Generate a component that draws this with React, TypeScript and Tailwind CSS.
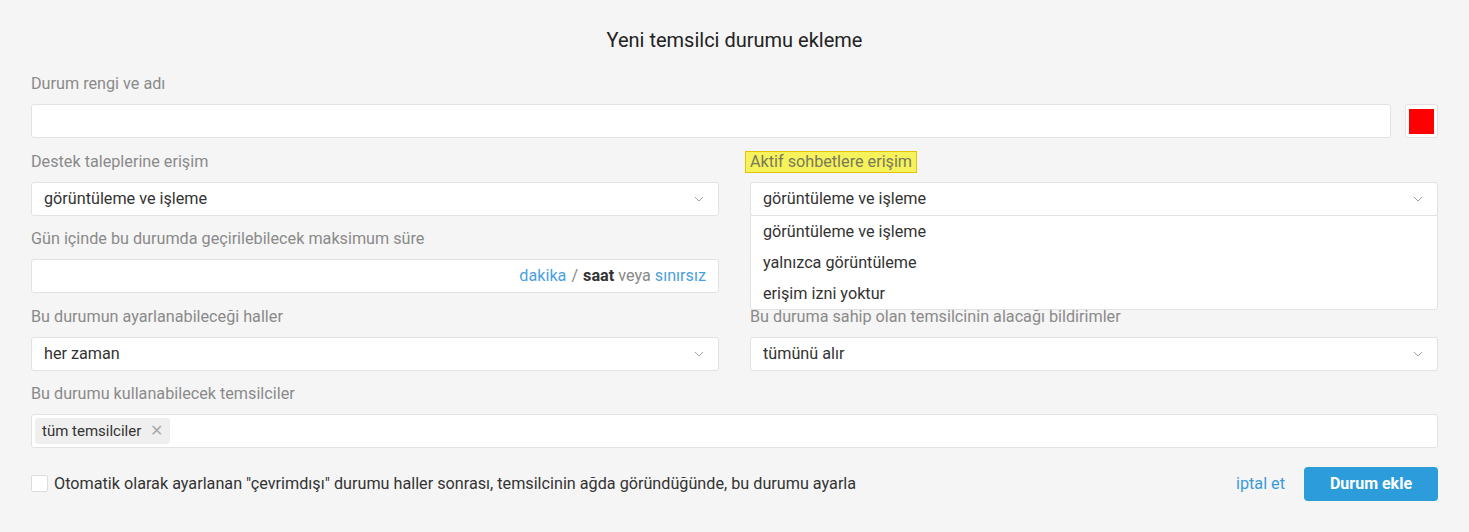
import React from 'react';

function Chevron() {
  return (
    <svg width="10" height="6" viewBox="0 0 10 6" className="shrink-0">
      <path d="M1 1l4 4 4-4" fill="none" stroke="#a0a0a0" strokeWidth="1" />
    </svg>
  );
}

function Label({ children }: { children: React.ReactNode }) {
  return <div className="h-[20px] leading-[20px] text-[16.2px] text-[#8a8a8a] mb-[10px]">{children}</div>;
}

function Select({ value }: { value: string }) {
  return (
    <div className="h-[34px] bg-white border border-[#e2e2e2] rounded-[3px] flex items-center justify-between pl-[12px] pr-[14px]">
      <span className="text-[16.2px] text-[#333]">{value}</span>
      <Chevron />
    </div>
  );
}

export default function App() {
  return (
    <div className="min-h-[532px] bg-[#f5f5f5] px-[31px] pt-[28px] pb-[31px]" style={{ fontFamily: 'Roboto, "Noto Sans", sans-serif' }}>
      <h1 className="text-center text-[20px] leading-[24px] text-[#222] mb-[22px]">Yeni temsilci durumu ekleme</h1>

      {/* Name + color */}
      <div className="mb-[14px]">
        <Label>Durum rengi ve adı</Label>
        <div className="flex gap-[14px]">
          <div className="flex-1 h-[34px] bg-white border border-[#e2e2e2] rounded-[3px]" />
          <div className="w-[33px] h-[34px] bg-white border border-[#e2e2e2] rounded-[3px] flex items-center justify-center">
            <div className="w-[25px] h-[25px] bg-[#ff0000]" />
          </div>
        </div>
      </div>

      <div className="grid grid-cols-2 gap-x-[31px]">
        <div className="mb-[13px]">
          <Label>Destek taleplerine erişim</Label>
          <Select value="görüntüleme ve işleme" />
        </div>
        <div className="mb-[13px] relative">
          <div className="h-[20px] mb-[10px] flex items-center">
            <span className="text-[16.2px] leading-[20px] text-[#7a7a5a] bg-[#f5f25c] border border-[#e4c20a] px-[4px] -ml-[5px]">Aktif sohbetlere erişim</span>
          </div>
          <div className="relative">
            <Select value="görüntüleme ve işleme" />
            <div className="absolute left-0 right-0 top-[33px] z-10 bg-white border border-[#e2e2e2] rounded-b-[3px]">
              {['görüntüleme ve işleme', 'yalnızca görüntüleme', 'erişim izni yoktur'].map((o) => (
                <div key={o} className="h-[31px] flex items-center pt-[2px] px-[12px] text-[16.2px] text-[#333]">{o}</div>
              ))}
            </div>
          </div>
        </div>

        <div className="mb-[14px]">
          <Label>Gün içinde bu durumda geçirilebilecek maksimum süre</Label>
          <div className="h-[34px] bg-white border border-[#e2e2e2] rounded-[3px] flex items-center justify-end pr-[12px] text-[16.2px]">
            <span className="text-[#4a9fe0]">dakika</span>
            <span className="text-[#888] mx-[5px]">/</span>
            <span className="text-[#333] font-bold">saat</span>
            <span className="text-[#888] mx-[4px]">veya</span>
            <span className="text-[#4a9fe0]">sınırsız</span>
          </div>
        </div>
        <div />

        <div className="mb-[13px]">
          <Label>Bu durumun ayarlanabileceği haller</Label>
          <Select value="her zaman" />
        </div>
        <div className="mb-[13px]">
          <Label>Bu duruma sahip olan temsilcinin alacağı bildirimler</Label>
          <Select value="tümünü alır" />
        </div>
      </div>

      <div className="mb-[19px]">
        <Label>Bu durumu kullanabilecek temsilciler</Label>
        <div className="h-[34px] bg-white border border-[#e2e2e2] rounded-[3px] flex items-center px-[3px]">
          <span className="h-[26px] bg-[#efefef] rounded-[3px] flex items-center pl-[7px] pr-[7px] text-[15px] text-[#333]">
            tüm temsilciler
            <span className="ml-[9px] text-[#aaa] text-[16px] leading-none">✕</span>
          </span>
        </div>
      </div>

      <div className="flex items-center justify-between">
        <label className="flex items-center gap-[6px]">
          <span className="w-[17px] h-[17px] bg-white border border-[#dcdcdc] rounded-[2px]" />
          <span className="text-[16.2px] text-[#333]">Otomatik olarak ayarlanan "çevrimdışı" durumu haller sonrası, temsilcinin ağda göründüğünde, bu durumu ayarla</span>
        </label>
        <div className="flex items-center gap-[19px]">
          <span className="text-[16.2px] text-[#3a9ad9]">iptal et</span>
          <button className="w-[134px] h-[34px] bg-[#2d9cdb] text-white text-[16px] font-bold rounded-[4px]">Durum ekle</button>
        </div>
      </div>
    </div>
  );
}
